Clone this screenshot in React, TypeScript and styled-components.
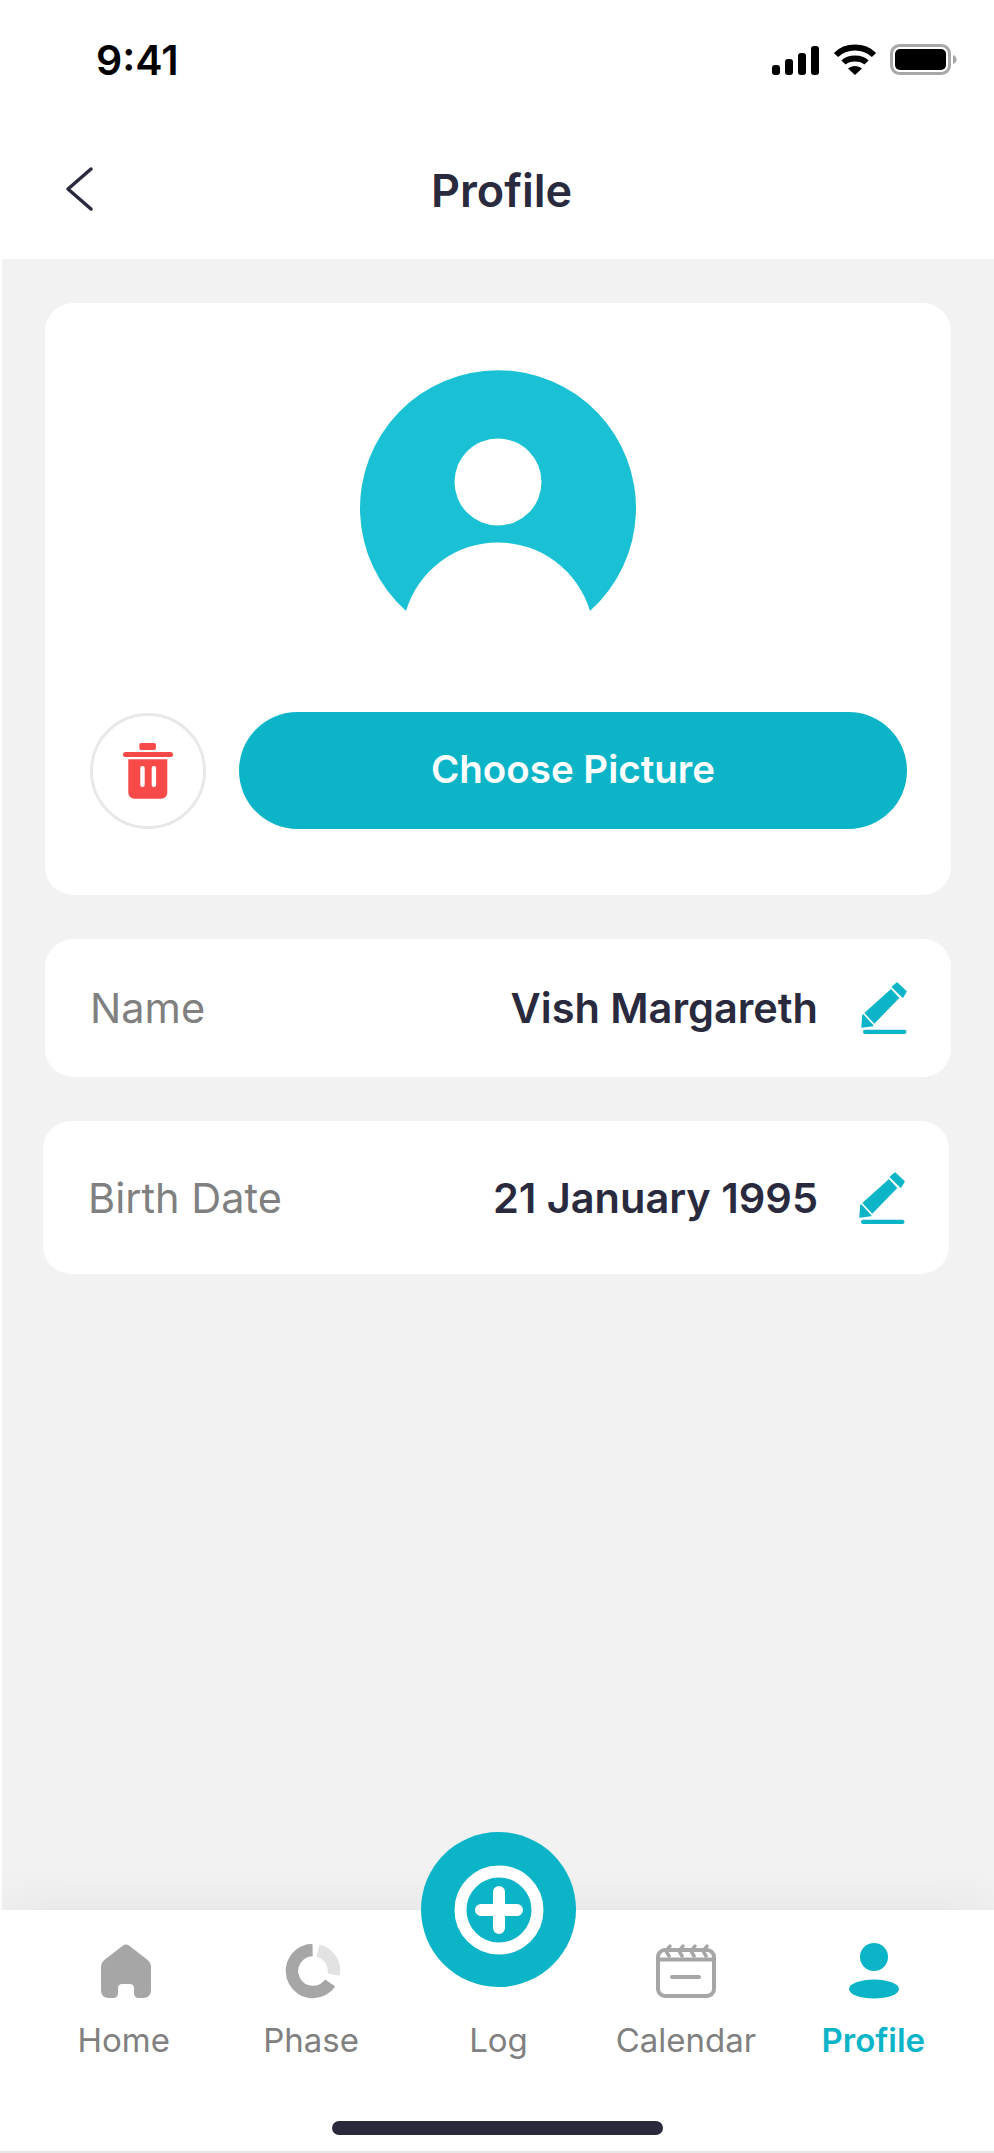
import React from "react";
import styled, { createGlobalStyle } from "styled-components";

const TEAL = "#0cb4c7";
const INK = "#2a2a3e";
const MUTED = "#a6a6a6";

const GlobalStyle = createGlobalStyle`
  html, body { margin: 0; padding: 0; background: #fff; }
  * { box-sizing: border-box; }
  body { font-family: Inter, "Liberation Sans", sans-serif; }
`;

const Screen = styled.div`
  width: 994px;
  height: 2153px;
  display: flex;
  flex-direction: column;
  background: #fff;
  overflow: hidden;
`;

const StatusBar = styled.div`
  height: 120px;
  padding: 37px 37px 0 96px;
  display: flex;
  justify-content: space-between;
  align-items: flex-start;
`;

const Clock = styled.div`
  font-family: Inter, "Liberation Sans", sans-serif;
  font-size: 41px;
  line-height: 46px;
  font-weight: 600;
  color: #000;
`;

const StatusIcons = styled.div`
  display: flex;
  align-items: flex-start;
  gap: 13px;
  padding-top: 7px;
`;

const Header = styled.header`
  height: 139px;
  display: flex;
  align-items: center;
  justify-content: center;
  position: relative;
`;

const BackButton = styled.svg`
  position: absolute;
  left: 65px;
  top: 46px;
`;

const Title = styled.h1`
  margin: 0 0 0 9px;
  font-size: 45px;
  line-height: 50px;
  font-weight: 600;
  color: ${INK};
  padding-top: 2px;
`;

const Content = styled.main`
  flex: 1;
  margin-left: 2px;
  background: #f2f2f2;
  padding: 44px 41px 0 41px;
  display: flex;
  flex-direction: column;
  gap: 44px;
`;

const PhotoCard = styled.section`
  width: 906px;
  margin-left: 2px;
  background: #fff;
  border-radius: 28px;
  padding: 67px 44px 66px 45px;
  display: flex;
  flex-direction: column;
  align-items: center;
`;

const Avatar = styled.svg`
  display: block;
  margin-bottom: 101px;
  margin-right: 1px;
`;

const PhotoActions = styled.div`
  width: 100%;
  display: flex;
  align-items: center;
  gap: 33px;
`;

const DeleteButton = styled.button`
  width: 116px;
  height: 116px;
  flex: none;
  padding: 0;
  border-radius: 50%;
  border: 3px solid #e8e8e8;
  background: #fff;
  display: flex;
  align-items: center;
  justify-content: center;
`;

const ChooseButton = styled.button`
  flex: 1;
  height: 117px;
  border: 0;
  border-radius: 59px;
  padding: 0 0 4px;
  background: ${TEAL};
  color: #fff;
  font-family: Inter, "Liberation Sans", sans-serif;
  font-size: 38.5px;
  font-weight: 600;
`;

const FieldCard = styled.section<{ $tall?: boolean }>`
  width: 906px;
  height: ${(p) => (p.$tall ? 153 : 138)}px;
  margin-left: ${(p) => (p.$tall ? 0 : 2)}px;
  background: #fff;
  border-radius: 28px;
  padding: 0 44px 0 45px;
  display: flex;
  align-items: center;
`;

const FieldLabel = styled.span`
  flex: 1;
  font-size: 41.5px;
  color: #808080;
`;

const FieldValue = styled.span`
  font-size: 41.5px;
  font-weight: 600;
  color: ${INK};
`;

const PencilIcon = styled.svg<{ $gap: number }>`
  margin-left: ${(p) => p.$gap}px;
  flex: none;
`;

const TabBar = styled.nav`
  height: 243px;
  position: relative;
  background: #fff;
  border-bottom: 2px solid #e6e6e6;
  box-shadow: 0 -6px 50px rgba(0, 0, 0, 0.06);
  display: flex;
  flex-direction: column;
  align-items: center;
`;

const TabRow = styled.div`
  width: 100%;
  padding: 33px 27px 0 30px;
  display: grid;
  grid-template-columns: repeat(5, 1fr);
`;

const Tab = styled.div`
  display: flex;
  flex-direction: column;
  align-items: center;
`;

const TabIcon = styled.div<{ $nudge?: number }>`
  height: 56px;
  display: flex;
  align-items: center;
  justify-content: center;
  margin-bottom: 21px;
  margin-left: ${(p) => p.$nudge ?? 0}px;
`;

const TabLabel = styled.span<{ $active?: boolean }>`
  font-size: 33px;
  line-height: 40px;
  font-weight: ${(p) => (p.$active ? 600 : 400)};
  color: ${(p) => (p.$active ? TEAL : "#808080")};
`;

const AddButton = styled.div`
  position: absolute;
  left: 421px;
  top: -78px;
  width: 155px;
  height: 155px;
  border-radius: 50%;
  background: ${TEAL};
  display: flex;
  align-items: center;
  justify-content: center;
`;

const HomeIndicator = styled.div`
  width: 331px;
  height: 14px;
  margin-top: 61px;
  border-radius: 7px;
  background: ${INK};
`;

const Pencil = ({ gap }: { gap: number }) => (
  <PencilIcon $gap={gap} width="46" height="52" viewBox="0 0 46 52" fill={TEAL}>
    <path d="M36 1 45 9.5 41.7 15 31.5 5z" stroke={TEAL} strokeWidth="1.5" strokeLinejoin="round" />
    <path d="M30 7 38.3 16 13.3 41.7 3.3 31z" />
    <path d="M2 33 11.7 43.5 1 45z" stroke={TEAL} strokeWidth="1.5" strokeLinejoin="round" />
    <rect x="2" y="47.7" width="43.5" height="4.3" rx="2.1" />
  </PencilIcon>
);

export default function App() {
  return (
    <Screen>
      <GlobalStyle />
      <StatusBar>
        <Clock>9:41</Clock>
        <StatusIcons>
          <svg width="48" height="31" viewBox="0 0 48 31" style={{ marginTop: 2 }}>
            <rect x="0" y="19" width="8" height="10" rx="3" />
            <rect x="13" y="13" width="8" height="16" rx="3" />
            <rect x="26" y="7" width="8" height="22" rx="3" />
            <rect x="39" y="0" width="8" height="29" rx="3" />
          </svg>
          <svg width="44" height="32" viewBox="0 0 44 32" fill="none" stroke="#000" strokeWidth="6">
            <path d="M3 11C13 1 31 1 41 11" />
            <path d="M10.5 18.5C16 13 28 13 33.500 18.500" />
            <path d="M15 24.500 22 31 29 24.500C25 21 19 21 15 24.500z" fill="#000" stroke="none" />
          </svg>
          <svg width="67" height="32" viewBox="0 0 67 32">
            <rect x="1.500" y="1.500" width="58" height="28" rx="8" fill="none" stroke="#a8a8a8" strokeWidth="3" />
            <rect x="5" y="5" width="51" height="21" rx="5" />
            <path d="M63 11c2.500 .5 3.500 2.500 3.500 4.500s-1 4-3.500 4.500z" fill="#a8a8a8" />
          </svg>
        </StatusIcons>
      </StatusBar>

      <Header>
        <BackButton width="30" height="46" viewBox="0 0 30 46" fill="none" stroke={INK} strokeWidth="3.500" strokeLinecap="round" strokeLinejoin="round">
          <path d="M26 3 3 23 26 43" />
        </BackButton>
        <Title>Profile</Title>
      </Header>

      <Content>
        <PhotoCard>
          <Avatar width="276" height="241" viewBox="0 0 276 241">
            <path d="M46 241A138 138 0 1 1 230 241A96 96 0 0 0 46 241z" fill="#1ac1d4" />
            <circle cx="138" cy="112" r="43.500" fill="#fff" />
          </Avatar>
          <PhotoActions>
            <DeleteButton aria-label="Delete picture">
              <svg width="50" height="56" viewBox="0 0 50 56" fill="#f94a4a">
                <rect x="16.300" y="0" width="16.700" height="7" rx="2" />
                <rect x="0" y="9" width="50" height="5" rx="2.500" />
                <path d="M5.300 16.300h39v33.400a6 6 0 0 1-6 6h-27a6 6 0 0 1-6-6z" />
                <rect x="17.300" y="23" width="4.400" height="21" rx="2" fill="#fff" />
                <rect x="28.700" y="23" width="4.400" height="21" rx="2" fill="#fff" />
              </svg>
            </DeleteButton>
            <ChooseButton>Choose Picture</ChooseButton>
          </PhotoActions>
        </PhotoCard>

        <FieldCard>
          <FieldLabel>Name</FieldLabel>
          <FieldValue>Vish Margareth</FieldValue>
          <Pencil gap={43} />
        </FieldCard>

        <FieldCard $tall>
          <FieldLabel>Birth Date</FieldLabel>
          <FieldValue>21 January 1995</FieldValue>
          <Pencil gap={41} />
        </FieldCard>
      </Content>

      <TabBar>
        <AddButton>
          <svg width="90" height="90" viewBox="0 0 90 90" fill="none" stroke="#fff">
            <circle cx="45" cy="45" r="38.500" strokeWidth="12" />
            <path d="M45 27v36M27 45h36" strokeWidth="12" strokeLinecap="round" />
          </svg>
        </AddButton>
        <TabRow>
          <Tab>
            <TabIcon $nudge={4}>
              <svg width="50" height="54" viewBox="0 0 50 54" fill={MUTED}>
                <path d="M22 1.500C24 0 26 0 28 1.500L46 15.500C48.500 17.500 50 19.500 50 23V46C50 51 47 54 42 54H38C35 54 33 52 33 49V44C33 41 31 40 29 40H21C19 40 17 41 17 44V49C17 52 15 54 12 54H8C3 54 0 51 0 46V23C0 19.500 1.500 17.500 4 15.500z" />
              </svg>
            </TabIcon>
            <TabLabel>Home</TabLabel>
          </Tab>
          <Tab>
            <TabIcon $nudge={4}>
              <svg width="56" height="56" viewBox="0 0 56 56" fill="none" strokeWidth="12.500">
                <path d="M27.600 7A21 21 0 1 0 45.200 40" stroke={MUTED} />
                <path d="M33 7.600A21 21 0 0 1 48.700 31.600" stroke="#e2e2e2" />
              </svg>
            </TabIcon>
            <TabLabel>Phase</TabLabel>
          </Tab>
          <Tab>
            <TabIcon />
            <TabLabel>Log</TabLabel>
          </Tab>
          <Tab>
            <TabIcon>
              <svg width="60" height="54" viewBox="0 0 60 54" fill="none" stroke={MUTED} strokeWidth="4" strokeLinecap="round">
                <rect x="2" y="6" width="56" height="46" rx="7" />
                <path d="M2 15.500H58" />
                <path d="M13 12 10 7 14 2M26 12 23 7 27 2M38 12 35 7 39 2M50 12 47 7 51 2" strokeWidth="3.500" />
                <path d="M16 33H43" />
              </svg>
            </TabIcon>
            <TabLabel>Calendar</TabLabel>
          </Tab>
          <Tab>
            <TabIcon $nudge={2}>
              <svg width="50" height="56" viewBox="0 0 50 56" fill={TEAL}>
                <circle cx="25" cy="14" r="14" />
                <ellipse cx="25" cy="46" rx="25" ry="9.500" />
              </svg>
            </TabIcon>
            <TabLabel $active>Profile</TabLabel>
          </Tab>
        </TabRow>
        <HomeIndicator />
      </TabBar>
    </Screen>
  );
}
